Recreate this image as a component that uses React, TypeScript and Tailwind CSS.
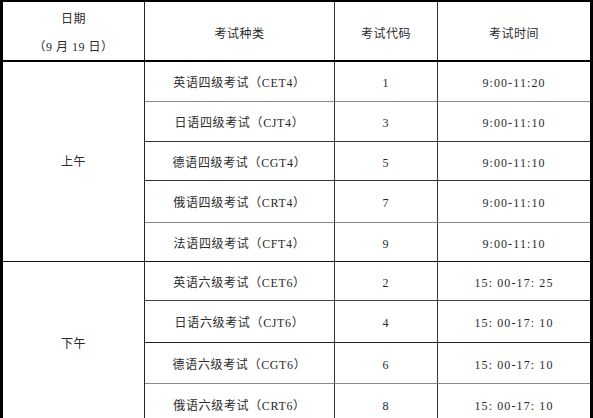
import React from "react";

type Exam = { name: string; code: string; time: string; h: string; line: string };

const morning: Exam[] = [
  { name: "英语四级考试（CET4）", code: "1", time: "9:00-11:20", h: "h-[40px]", line: "border-[#8a8a8a]" },
  { name: "日语四级考试（CJT4）", code: "3", time: "9:00-11:10", h: "h-[40px]", line: "border-[#333]" },
  { name: "德语四级考试（CGT4）", code: "5", time: "9:00-11:10", h: "h-[39px]", line: "border-[#333]" },
  { name: "俄语四级考试（CRT4）", code: "7", time: "9:00-11:10", h: "h-[42px]", line: "border-[#8a8a8a]" },
  { name: "法语四级考试（CFT4）", code: "9", time: "9:00-11:10", h: "h-[39px]", line: "border-[#111]" },
];

const afternoon: Exam[] = [
  { name: "英语六级考试（CET6）", code: "2", time: "15: 00-17: 25", h: "h-[39px]", line: "border-[#444]" },
  { name: "日语六级考试（CJT6）", code: "4", time: "15: 00-17: 10", h: "h-[42px]", line: "border-[#222]" },
  { name: "德语六级考试（CGT6）", code: "6", time: "15: 00-17: 10", h: "h-[41px]", line: "border-[#8a8a8a]" },
  { name: "俄语六级考试（CRT6）", code: "8", time: "15: 00-17: 10", h: "h-[42px]", line: "border-[#333]" },
];

const cell = "border-r border-b text-center align-middle pt-[3px]";

const Rows: React.FC<{ label: string; items: Exam[]; labelLine: string }> = ({ label, items, labelLine }) => (
  <>
    {items.map((e, i) => (
      <tr key={e.code} className={e.h}>
        {i === 0 && (
          <td rowSpan={items.length} className={`border-r border-b border-r-[#222] ${labelLine} text-center align-middle`}>
            {label}
          </td>
        )}
        <td className={`${cell} tracking-[0.65px] border-r-[#333] ${e.line}`}>{e.name}</td>
        <td className={`${cell} tracking-[1px] border-r-[#333] ${e.line}`}>{e.code}</td>
        <td className={`border-b text-center align-middle pt-[3px] tracking-[1.1px] ${e.line}`}>{e.time}</td>
      </tr>
    ))}
  </>
);

export default function App() {
  return (
    <div className="w-[593px] h-[418px] overflow-hidden bg-white">
      <div
        className="w-[593px] border-t-2 border-l-[3px] border-r-[3px] border-black text-[12px] tracking-[0.5px] text-[#2a2a2a]"
        style={{ fontFamily: '"Liberation Serif", "Noto Sans CJK SC", serif' }}
      >
        <table className="w-full table-fixed border-separate border-spacing-0">
          <colgroup>
            <col className="w-[142px]" />
            <col className="w-[190px]" />
            <col className="w-[103px]" />
            <col />
          </colgroup>
          <thead>
            <tr className="h-[60px]">
              <th className="border-r border-b-2 border-r-[#222] border-b-black font-normal align-middle pt-[3px]">
                <div className="flex flex-col items-center gap-[10px]">
                  <span>日期</span>
                  <span>（9 月 19 日）</span>
                </div>
              </th>
              <th className="border-r border-b-2 border-r-[#333] border-b-black font-normal align-middle pt-[6px]">考试种类</th>
              <th className="border-r border-b-2 border-r-[#333] border-b-black font-normal align-middle pt-[6px]">考试代码</th>
              <th className="border-b-2 border-b-black font-normal align-middle pt-[6px]">考试时间</th>
            </tr>
          </thead>
          <tbody>
            <Rows label="上午" items={morning} labelLine="border-b-[#111]" />
            <Rows label="下午" items={afternoon} labelLine="border-b-[#333]" />
          </tbody>
        </table>
      </div>
    </div>
  );
}
